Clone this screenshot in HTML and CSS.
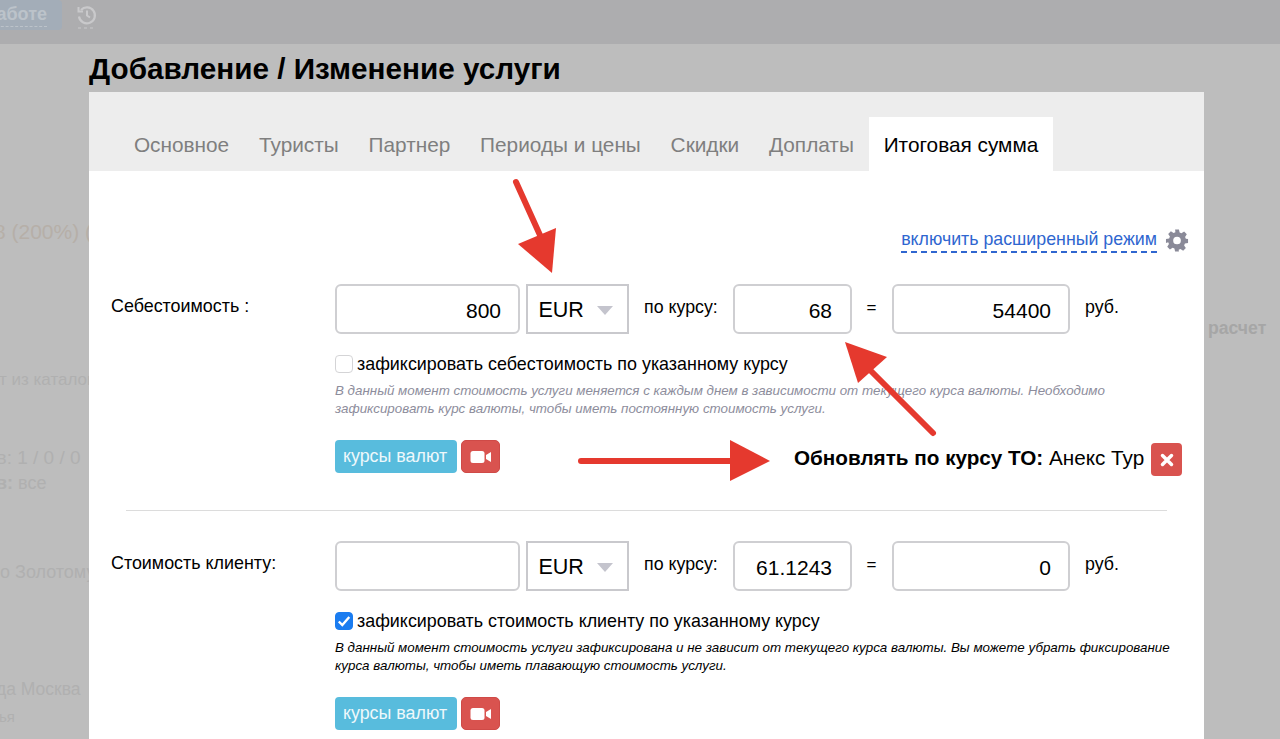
FILE: index.html
```html
<!DOCTYPE html>
<html lang="ru">
<head>
<meta charset="utf-8">
<title>Добавление / Изменение услуги</title>
<link rel="stylesheet" href="styles.css">
</head>
<body>
<div class="page">
  <header class="topbar">
    <span class="work-btn"><span class="work-text">аботе</span></span>
    <svg class="history" width="20" height="24" viewBox="0 0 20 24" fill="none" stroke="#c9c9cb" stroke-width="2.200"><path d="M4 5A8 8 0 1 1 2 11.500"/><path d="M1.500 2v4.500H6" stroke-width="2"/><path d="M10 5.500v5l3 2" stroke-width="2"/><path d="M1 23h18" stroke-width="1" stroke-dasharray="3 3"/></svg>
  </header>
  <div class="backdrop">
    <div class="bg-row r1">8 (200%) (</div>
    <div class="bg-row r2">т из каталог</div>
    <div class="bg-row r3">ов: 1 / 0 / 0</div>
    <div class="bg-row r4"><b>в:</b> все</div>
    <div class="bg-row r5">о Золотому</div>
    <div class="bg-row r6">да Москва</div>
    <div class="bg-row r7">ья</div>
    <div class="bg-right">расчет</div>
  </div>

  <section class="modal">
    <h1 class="title">Добавление / Изменение услуги</h1>
    <div class="panel">
      <nav class="tabs">
        <span class="tab">Основное</span>
        <span class="tab">Туристы</span>
        <span class="tab">Партнер</span>
        <span class="tab">Периоды и цены</span>
        <span class="tab">Скидки</span>
        <span class="tab">Доплаты</span>
        <span class="tab active">Итоговая сумма</span>
      </nav>
      <div class="content">
        <div class="mode">
          <span class="mode-link">включить расширенный режим</span>
          <svg class="gear" width="24" height="24" viewBox="0 0 24 24"><path fill="#8a8a98" fill-rule="evenodd" d="M10 1h4l.7 3.2 1.900.8 2.800-1.800 2.800 2.800-1.800 2.800.8 1.900L23.500 11v4l-3.300.7-.8 1.900 1.800 2.800-2.800 2.800-2.800-1.800-1.900.8L14 24h-4l-.7-3.200-1.900-.8-2.800 1.800-2.800-2.800 1.800-2.800-.8-1.900L.5 15v-4l3.300-.7.8-1.900L2.800 5.600l2.800-2.800 2.800 1.800 1.900-.8zM12 8.500a4 4 0 1 0 0 8 4 4 0 0 0 0-8z" transform="translate(0.5 -0.5) scale(0.96)"/></svg>
        </div>

        <div class="cost">
          <div class="label">Себестоимость :</div>
          <div class="body">
            <div class="fields">
              <div class="input w-amount">800</div>
              <div class="select">EUR<i class="caret"></i></div>
              <span class="txt by">по курсу:</span>
              <div class="input w-rate">68</div>
              <span class="txt eq">=</span>
              <div class="input w-total">54400</div>
              <span class="txt rub">руб.</span>
            </div>
            <label class="fix"><span class="check"></span>зафиксировать себестоимость по указанному курсу</label>
            <p class="note muted">В данный момент стоимость услуги меняется с каждым днем в зависимости от текущего курса валюты. Необходимо<br>зафиксировать курс валюты, чтобы иметь постоянную стоимость услуги.</p>
            <div class="actions">
              <span class="btn-info">курсы валют</span>
              <span class="btn-video"><svg width="22" height="14" viewBox="0 0 22 14"><rect x="0.500" y="1" width="14" height="12" rx="2.500" fill="#fff"/><path d="M16 5L21 2V12L16 9Z" fill="#fff"/></svg></span>
              <div class="update">
                <span class="update-text"><b>Обновлять по курсу ТО:</b> Анекс Тур</span>
                <span class="btn-close"><svg width="14" height="14" viewBox="0 0 14 14"><path d="M2.500 2.500l9 9M11.500 2.500l-9 9" stroke="#fff" stroke-width="3.500" stroke-linecap="round"/></svg></span>
              </div>
            </div>
          </div>
        </div>

        <hr class="divider">

        <div class="cost">
          <div class="label">Стоимость клиенту:</div>
          <div class="body">
            <div class="fields">
              <div class="input w-amount"></div>
              <div class="select">EUR<i class="caret"></i></div>
              <span class="txt by">по курсу:</span>
              <div class="input w-rate">61.1243</div>
              <span class="txt eq">=</span>
              <div class="input w-total">0</div>
              <span class="txt rub">руб.</span>
            </div>
            <label class="fix"><span class="check on"><svg width="14" height="12" viewBox="0 0 14 12"><path d="M1.800 6.500l3.500 3.500 7-8" fill="none" stroke="#fff" stroke-width="2.400"/></svg></span>зафиксировать стоимость клиенту по указанному курсу</label>
            <p class="note">В данный момент стоимость услуги зафиксирована и не зависит от текущего курса валюты. Вы можете убрать фиксирование<br>курса валюты, чтобы иметь плавающую стоимость услуги.</p>
            <div class="actions">
              <span class="btn-info">курсы валют</span>
              <span class="btn-video"><svg width="22" height="14" viewBox="0 0 22 14"><rect x="0.500" y="1" width="14" height="12" rx="2.500" fill="#fff"/><path d="M16 5L21 2V12L16 9Z" fill="#fff"/></svg></span>
            </div>
          </div>
        </div>
      </div>
    </div>
  </section>

  <svg class="arrows" width="1280" height="739" viewBox="0 0 1280 739">
    <g fill="#e5392e" stroke="#e5392e" stroke-linecap="round">
      <path d="M516 182L544 244" stroke-width="6" fill="none"/>
      <path d="M556 228L552 273L518 244Z" stroke="none"/>
      <path d="M933 433L866 366" stroke-width="6" fill="none"/>
      <path d="M845 342L887 357L858 383Z" stroke="none"/>
      <path d="M581 461H745" stroke-width="6" fill="none"/>
      <path d="M730 440L770 461L730 481Z" stroke="none"/>
    </g>
  </svg>
</div>
</body>
</html>
```
FILE: styles.css
```css
* { box-sizing: border-box; }
html, body { margin: 0; height: 100%; }
body {
  font-family: "Liberation Sans", Arial, sans-serif;
  color: #000;
  background: #bdbdbd;
  overflow: hidden;
}
.page { position: relative; width: 1280px; height: 739px; overflow: hidden; }

.topbar {
  height: 44px;
  background: #adadaf;
  display: flex;
  align-items: flex-start;
  gap: 15px;
}
.work-btn {
  width: 62px;
  height: 30px;
  background: #a3adb8;
  border-radius: 0 4px 4px 0;
  overflow: hidden;
  display: flex;
  justify-content: flex-end;
  padding-right: 15px;
  font-weight: 700;
  font-size: 18px;
  line-height: 29px;
  color: #bcc3ca;
}
.work-text { border-bottom: 1px dashed #bcc3ca; height: 27px; }
.history { margin-top: 5px; }

.backdrop { position: relative; height: 695px; color: #b0b0b0; font-size: 20px; white-space: nowrap; overflow: hidden; background: #bdbdbd; }
.bg-row { position: absolute; left: 0; }
.r1 { top: 176px; font-size: 21px; color: #b6afa8; left: -6px; }
.r2 { top: 326px; font-size: 17px; left: -1px; }
.r3 { top: 403px; font-size: 19px; left: -14px; }
.r4 { top: 429px; font-size: 18px; left: -4px; }
.r4 b { font-weight: 700; }
.r5 { top: 518px; font-size: 18px; }
.r6 { top: 635px; font-size: 17.500px; left: -4px; }
.r7 { top: 664px; font-size: 15px; left: -1px; }
.bg-right { position: absolute; left: 1208px; top: 274px; font-size: 17.600px; font-weight: 700; color: #a6a6a6; }

.modal { position: absolute; left: 89px; top: 44px; width: 1115px; }
.title { margin: 0; height: 48px; font-size: 29.700px; line-height: 49px; font-weight: 700; }
.panel { background: #fff; height: 660px; }
.tabs {
  height: 79px;
  background: #ededed;
  padding: 25px 0 0 30px;
  display: flex;
  font-size: 20.800px;
}
.tab { padding: 0 14.900px; line-height: 55px; color: #7f7f7f; }
.tab.active { background: #fff; color: #000; }

.content { padding: 0 23px; }
.mode {
  height: 113px;
  display: flex;
  justify-content: flex-end;
  align-items: flex-start;
  padding-top: 56px;
  margin-right: -8px;
  gap: 8px;
}
.mode-link {
  color: #2f66d0;
  font-size: 17.800px;
  line-height: 24px;
  height: 26px;
  border-bottom: 2px dashed #2f66d0;
}
.gear { margin-top: 2px; }

.cost { display: flex; }
.label { width: 223px; font-size: 17.900px; line-height: 20px; padding-top: 12px; white-space: nowrap; text-indent: -1px; }
.body { flex: 1; min-width: 0; }
.fields { display: flex; align-items: flex-start; height: 50px; }
.input {
  height: 50px;
  border: 2px solid #cfcfd2;
  border-radius: 6px;
  background: #fff;
  text-align: right;
  padding-right: 17px;
  font-size: 21px;
  line-height: 50px;
}
.w-amount { width: 185px; }
.w-rate { width: 119px; padding-right: 18px; }
.w-total { width: 178px; }
.select {
  width: 103px;
  height: 50px;
  margin-left: 6px;
  border: 2px solid #c9c9cd;
  padding-left: 10.500px;
  font-size: 21.500px;
  line-height: 48px;
  position: relative;
}
.caret {
  position: absolute;
  left: 69px;
  top: 20px;
  border-left: 8.500px solid transparent;
  border-right: 8.500px solid transparent;
  border-top: 9px solid #c4c4cd;
}
.txt { font-size: 17.800px; line-height: 47px; }
.by { margin-left: 15px; width: 89px; }
.eq { width: 40px; padding-right: 1px; text-align: center; font-size: 17px; }
.rub { margin-left: 15px; }

.fix { display: flex; align-items: center; margin-top: 19px; height: 22px; font-size: 17.900px; line-height: 22px; white-space: nowrap; }
.check {
  width: 18px;
  height: 18px;
  border: 1px solid #d4d4d6;
  border-radius: 4px;
  background: #fff;
  margin-right: 4px;
  display: flex;
  align-items: center;
  justify-content: center;
}
.check.on { background: #1a7cf0; border-color: #1a7cf0; }
.note { margin: 7px 0 0; font-size: 13.360px; line-height: 18px; font-style: italic; color: #000; white-space: nowrap; }
.note.muted { color: #8d8d9c; }
.actions { display: flex; align-items: flex-start; margin-top: 22px; height: 33px; position: relative; gap: 4px; }
.btn-info {
  width: 122px;
  height: 33px;
  padding-right: 2px;
  background: #58bcdd;
  color: #eef8fb;
  border-radius: 4px;
  font-size: 17.850px;
  line-height: 32px;
  text-align: center;
}
.btn-video {
  width: 39px;
  height: 33px;
  background: #d9534f;
  border: 1px solid #cf4a47;
  border-radius: 5px;
  display: flex;
  align-items: center;
  justify-content: center;
}
.update { position: absolute; left: 459px; top: 3px; display: flex; align-items: flex-start; gap: 7px; }
.update-text { font-size: 20.700px; line-height: 30px; white-space: nowrap; }
.btn-close {
  width: 31px;
  height: 33px;
  background: #d9534f;
  border-radius: 4px;
  display: flex;
  align-items: center;
  justify-content: center;
}
.divider { border: 0; border-top: 1px solid #dcdcdc; margin: 37px 14px 30px; }
.arrows { position: absolute; left: 0; top: 0; pointer-events: none; }
```
